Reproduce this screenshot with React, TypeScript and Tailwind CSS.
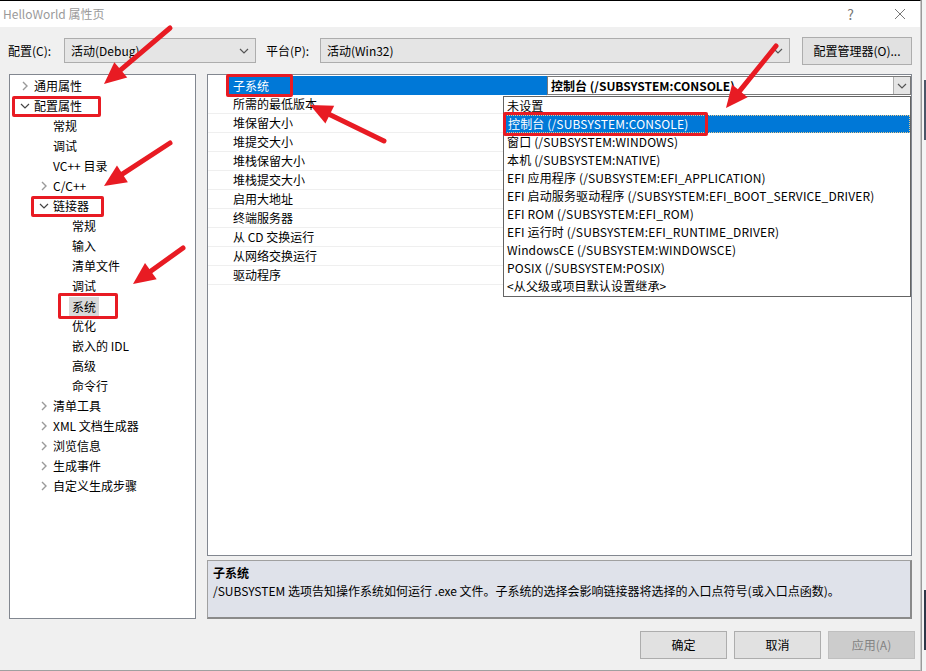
import React from 'react';

type TreeItem = { label: string; level: number; chevron?: 'open' | 'closed'; selected?: boolean };

const tree: TreeItem[] = [
  { label: '通用属性', level: 0, chevron: 'closed' },
  { label: '配置属性', level: 0, chevron: 'open' },
  { label: '常规', level: 1 },
  { label: '调试', level: 1 },
  { label: 'VC++ 目录', level: 1 },
  { label: 'C/C++', level: 1, chevron: 'closed' },
  { label: '链接器', level: 1, chevron: 'open' },
  { label: '常规', level: 2 },
  { label: '输入', level: 2 },
  { label: '清单文件', level: 2 },
  { label: '调试', level: 2 },
  { label: '系统', level: 2, selected: true },
  { label: '优化', level: 2 },
  { label: '嵌入的 IDL', level: 2 },
  { label: '高级', level: 2 },
  { label: '命令行', level: 2 },
  { label: '清单工具', level: 1, chevron: 'closed' },
  { label: 'XML 文档生成器', level: 1, chevron: 'closed' },
  { label: '浏览信息', level: 1, chevron: 'closed' },
  { label: '生成事件', level: 1, chevron: 'closed' },
  { label: '自定义生成步骤', level: 1, chevron: 'closed' },
];

const props = [
  '所需的最低版本',
  '堆保留大小',
  '堆提交大小',
  '堆栈保留大小',
  '堆栈提交大小',
  '启用大地址',
  '终端服务器',
  '从 CD 交换运行',
  '从网络交换运行',
  '驱动程序',
];

const options = [
  '未设置',
  '控制台 (/SUBSYSTEM:CONSOLE)',
  '窗口 (/SUBSYSTEM:WINDOWS)',
  '本机 (/SUBSYSTEM:NATIVE)',
  'EFI 应用程序 (/SUBSYSTEM:EFI_APPLICATION)',
  'EFI 启动服务驱动程序 (/SUBSYSTEM:EFI_BOOT_SERVICE_DRIVER)',
  'EFI ROM (/SUBSYSTEM:EFI_ROM)',
  'EFI 运行时 (/SUBSYSTEM:EFI_RUNTIME_DRIVER)',
  'WindowsCE (/SUBSYSTEM:WINDOWSCE)',
  'POSIX (/SUBSYSTEM:POSIX)',
  '<从父级或项目默认设置继承>',
];

// red annotation arrows: start -> tip
const arrows = [
  [170, 28, 104, 84],
  [170, 143, 104, 186],
  [183, 248, 133, 284],
  [384, 141, 310, 105],
  [776, 46, 726, 108],
];

// red annotation boxes: x, y, w, h
const boxes = [
  [12, 96, 89, 21],
  [31, 196, 73, 21],
  [58, 293, 60, 26],
  [226, 74, 67, 23],
  [503, 112, 205, 24],
];

function ChevronDown({ className = '' }: { className?: string }) {
  return (
    <svg width="10" height="6" viewBox="0 0 10 6" className={className}>
      <path d="M1 1 L5 5 L9 1" fill="none" stroke="currentColor" strokeWidth="1.2" />
    </svg>
  );
}

function ChevronRight({ className = '' }: { className?: string }) {
  return (
    <svg width="6" height="10" viewBox="0 0 6 10" className={className}>
      <path d="M1 1 L5 5 L1 9" fill="none" stroke="currentColor" strokeWidth="1.4" />
    </svg>
  );
}

function Arrow({ a }: { a: number[] }) {
  const [x1, y1, x2, y2] = a;
  const dx = x2 - x1;
  const dy = y2 - y1;
  const len = Math.hypot(dx, dy);
  const ux = dx / len;
  const uy = dy / len;
  const head = 22;
  const half = 10;
  const bx = x2 - ux * head;
  const by = y2 - uy * head;
  const pts = `${x2},${y2} ${bx - uy * half},${by + ux * half} ${bx + uy * half},${by - ux * half}`;
  return (
    <g>
      <line x1={x1} y1={y1} x2={bx + ux * 2} y2={by + uy * 2} stroke="#e81b23" strokeWidth="5" strokeLinecap="round" />
      <polygon points={pts} fill="#e81b23" />
    </g>
  );
}

function Select({ text, width }: { text: string; width: string }) {
  return (
    <div className={`${width} h-[25px] flex items-center justify-between bg-[#e5e5e5] border border-[#adadad] pl-[6px] pr-[6px]`}>
      <span>{text}</span>
      <ChevronDown className="text-[#555]" />
    </div>
  );
}

export default function App() {
  return (
    <div className="relative w-[926px] h-[671px] flex bg-[#f0f0f0] text-[12px] text-black font-['Noto_Sans_CJK_SC',sans-serif] overflow-hidden">
      <div className="w-[921px] h-full flex flex-col border-t border-black border-b border-b-[#a0a0a0] border-r border-r-[#c8c8c8]">
        {/* title bar */}
        <div className="h-[26px] bg-white flex items-center justify-between pl-[3px] pr-[14px] text-[#9a9a9a] shrink-0">
          <span className="text-[12px]">HelloWorld 属性页</span>
          <div className="flex items-center gap-[40px] text-[14px] text-[#777]">
            <span>?</span>
            <svg width="12" height="12" viewBox="0 0 12 12">
              <path d="M1 1 L11 11 M11 1 L1 11" stroke="#777" strokeWidth="1" />
            </svg>
          </div>
        </div>

        {/* toolbar */}
        <div className="h-[47px] flex items-center pl-[8px] shrink-0">
          <span className="w-[56px]">配置(C):</span>
          <Select text="活动(Debug)" width="w-[192px]" />
          <span className="ml-[10px] w-[54px]">平台(P):</span>
          <Select text="活动(Win32)" width="w-[470px]" />
          <div className="ml-[12px] w-[110px] h-[28px] flex items-center justify-center bg-[#e1e1e1] border border-[#adadad]">
            配置管理器(O)...
          </div>
        </div>

        {/* main area */}
        <div className="flex h-[545px] pl-[9px] shrink-0">
          {/* tree */}
          <div className="w-[187px] h-full bg-white border border-[#828790] pt-[1px]">
            {tree.map((t, i) => (
              <div key={i} className="h-[20px] flex items-center" style={{ paddingLeft: 6 + t.level * 19 }}>
                <span className="w-[18px] flex items-center justify-center">
                  {t.chevron === 'open' && <ChevronDown className="text-[#444]" />}
                  {t.chevron === 'closed' && <ChevronRight className="text-[#9a9a9a]" />}
                </span>
                <span className={t.selected ? 'bg-[#d9d9d9] px-[3px] -ml-[3px] leading-[19px]' : ''}>{t.label}</span>
              </div>
            ))}
          </div>

          {/* right */}
          <div className="ml-[11px] w-[705px] h-full flex flex-col">
            <div className="h-[482px] bg-white border border-[#828790] pt-[1px]">
              <div className="h-[19px] flex">
                <div className="w-[20px]" />
                <div className="w-[319px] bg-[#0078d7] text-white flex items-center pl-[5px]">子系统</div>
                <div className="flex-1 flex items-center justify-between border border-[#7a7a7a] bg-white">
                  <span className="pl-[3px] font-bold">控制台 (/SUBSYSTEM:CONSOLE)</span>
                  <span className="w-[17px] h-full flex items-center justify-center bg-[#e5e5e5] border-l border-[#adadad]">
                    <ChevronDown className="text-[#555]" />
                  </span>
                </div>
              </div>
              {props.map((p) => (
                <div key={p} className="h-[19px] flex border-b border-[#efefef]">
                  <div className="w-[20px]" />
                  <div className="w-[319px] flex items-center pl-[5px] border-r border-[#efefef]">{p}</div>
                  <div className="flex-1" />
                </div>
              ))}
            </div>
            <div className="mt-[4px] h-[59px] bg-[#dfe2ea] border border-[#a0a0a0] border-b-2 border-r-2 border-b-[#8a8a8a] border-r-[#8a8a8a] px-[5px] pt-[3px]">
              <div className="font-bold leading-[18px]">子系统</div>
              <div className="leading-[18px]">/SUBSYSTEM 选项告知操作系统如何运行 .exe 文件。子系统的选择会影响链接器将选择的入口点符号(或入口点函数)。</div>
            </div>
          </div>
        </div>

        {/* buttons */}
        <div className="flex justify-end gap-[7px] pr-[5px] mt-[12px]">
          <div className="w-[87px] h-[28px] flex items-center justify-center bg-[#e1e1e1] border border-[#adadad]">确定</div>
          <div className="w-[87px] h-[28px] flex items-center justify-center bg-[#e1e1e1] border border-[#adadad]">取消</div>
          <div className="w-[87px] h-[28px] flex items-center justify-center bg-[#cccccc] border border-[#bfbfbf] text-[#838383]">应用(A)</div>
        </div>
      </div>
      <div className="flex-1 bg-[#f4f4f4] border-l border-[#9a9a9a] flex flex-col pt-[80px]">
        <div className="ml-[2px] w-[2px] h-[60px] bg-[#4a5568]" />
        <div className="ml-[2px] mt-[450px] w-[2px] h-[60px] bg-[#2d3748]" />
      </div>

      {/* dropdown list overlay */}
      <div className="absolute left-[503px] top-[96px] w-[408px] h-[201px] bg-white border border-[#646464]">
        {options.map((o, i) => (
          <div
            key={o}
            className={`h-[18px] flex items-center pl-[3px] whitespace-nowrap tracking-[0.15px] ${
              i === 1 ? 'bg-[#0078d7] text-white border border-dotted border-[#e8c88a]' : ''
            }`}
          >
            {o}
          </div>
        ))}
      </div>

      {/* annotations */}
      {boxes.map(([x, y, w, h], i) => (
        <div
          key={i}
          className="absolute border-[3px] border-[#e81b23] rounded-[2px] pointer-events-none"
          style={{ left: x, top: y, width: w, height: h }}
        />
      ))}
      <svg className="absolute left-0 top-0 pointer-events-none" width="926" height="671">
        {arrows.map((a, i) => (
          <Arrow key={i} a={a} />
        ))}
      </svg>
    </div>
  );
}
